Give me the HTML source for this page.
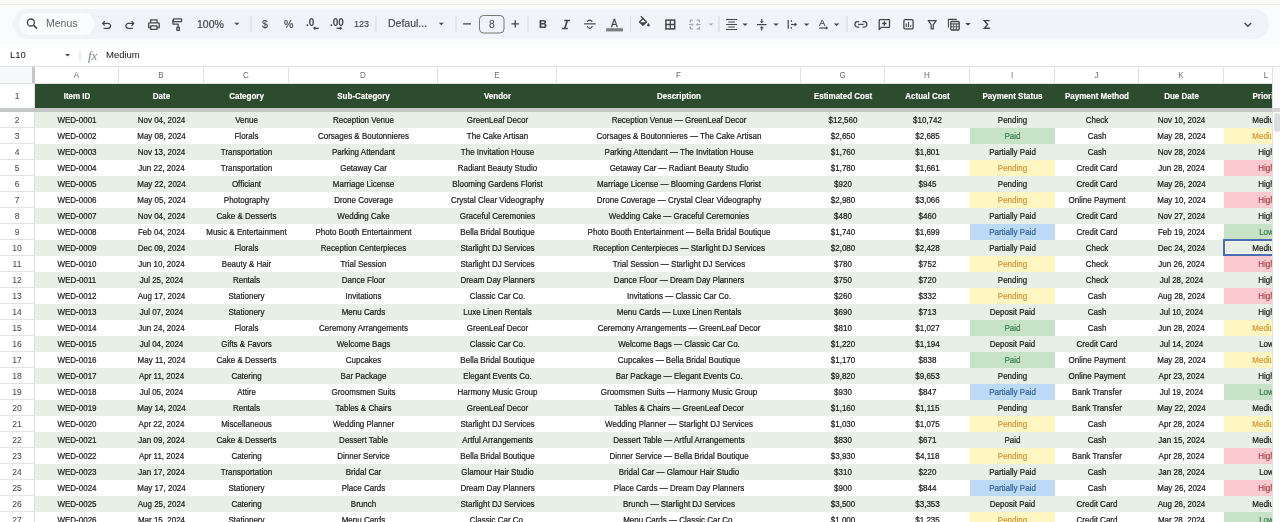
<!DOCTYPE html>
<html><head><meta charset="utf-8">
<style>
*{margin:0;padding:0;box-sizing:border-box}
html,body{width:1280px;height:522px;overflow:hidden;background:#fff;font-family:"Liberation Sans",sans-serif}
body>div,body>svg{will-change:transform}
.a{position:absolute}
#top{left:0;top:0;width:1280px;height:5px;background:#f9f9f5;border-bottom:1px solid #ebebeb}
#tbwrap{left:0;top:5px;width:1280px;height:39px;background:#f9fbfd}
#tb{left:13px;top:9.3px;width:1256px;height:29.7px;border-radius:15px;background:#f0f3f8}
#search{left:19px;top:13px;width:75px;height:21.5px;border-radius:11px;background:#fbfcfe}
.tt{color:#444746;font-size:10.5px;line-height:12px;white-space:nowrap}
#fbar{left:0;top:44px;width:1280px;height:22px;background:#fff}
.ch{position:absolute;top:66px;height:18px;border-right:1px solid #e1e3e1;border-top:1px solid #e1e3e1;border-bottom:1px solid #e1e3e1;background:#fff;color:#6a6e72;font-size:8px;line-height:17px;text-align:center}
.cell{position:absolute;height:16px;line-height:16px;font-size:8px;text-align:center;white-space:nowrap;overflow:hidden;color:#1a1a1a}
.cell span{display:inline-block;transform:translateY(0.5px) scaleY(1.12);-webkit-text-stroke:0.2px currentColor}
.rh{position:absolute;left:0;width:35px;height:16px;border-right:1px solid #e1e3e1;border-bottom:1px solid #e1e3e1;background:#fff;color:#505357;font-size:8.5px;line-height:15px;text-align:center}
.rh span{display:inline-block;transform:translateY(0.6px) scaleY(1.12);-webkit-text-stroke:0.1px currentColor}
.ch span{display:inline-block;transform:translateY(-0.4px) scaleY(1.1)}
.hd{position:absolute;top:84px;height:24px;line-height:24px;font-size:8px;font-weight:bold;color:#fff;text-align:center;white-space:nowrap;overflow:hidden}
.hd span{display:inline-block;transform:translateY(0.9px) scaleY(1.1);-webkit-text-stroke:0.15px #fff}
</style></head><body>
<div class="a" id="top"></div>
<div class="a" id="tbwrap"></div>
<div class="a" id="tb"></div>
<div class="a" id="search"></div>
<div class="a" id="fbar"></div>

<svg class="a" style="left:0;top:0" width="1280" height="66" viewBox="0 0 1280 66">
<g fill="none" stroke="#444746" stroke-width="1.3" stroke-linecap="butt" stroke-linejoin="round">
<circle cx="30.9" cy="22.5" r="3.5"/>
<path d="M33.5 25.1L37 28.6" stroke-width="1.5"/>
<path d="M104.8 21.2L102.6 23.4L104.8 25.6"/>
<path d="M102.8 23.4H108.1A2.45 2.45 0 0 1 108.1 28.3H103.5"/>
<path d="M131.6 21.2L133.8 23.4L131.6 25.6"/>
<path d="M133.6 23.4H128.3A2.45 2.45 0 0 0 128.3 28.3H132.9"/>
<path d="M150.7 22.4V19.8H157V22.4"/>
<path d="M150.7 27.6H148.7V23.6Q148.7 22.8 149.5 22.8H158.4Q159.2 22.8 159.2 23.6V27.6H157"/>
<rect x="150.7" y="25.9" width="6.3" height="3.4"/>
<rect x="173.4" y="18.8" width="8.2" height="2.9" rx="0.6"/>
<path d="M173.4 20.2H172.9V24.1H178.1V27.3"/>
<rect x="176.9" y="27.3" width="2.4" height="3" fill="none"/>
</g>
<path d="M234.4 22.8L239.4 22.8L236.9 25.2Z" fill="#444746"/>
<rect x="250.5" y="16" width="1" height="16" fill="#d5d8dc"/>
<rect x="375.5" y="16" width="1" height="16" fill="#d5d8dc"/>
<rect x="455.5" y="16" width="1" height="16" fill="#d5d8dc"/>
<rect x="527.5" y="16" width="1" height="16" fill="#d5d8dc"/>
<rect x="630" y="16" width="1" height="16" fill="#d5d8dc"/>
<rect x="718.5" y="16" width="1" height="16" fill="#d5d8dc"/>
<rect x="846.5" y="16" width="1" height="16" fill="#d5d8dc"/>
<path d="M318.8 28.3H314.3" stroke="#444746" stroke-width="1.3"/><path d="M312.9 28.3L315.4 26.3V30.3Z" fill="#444746"/>
<path d="M336.6 28.3H340.6" stroke="#444746" stroke-width="1.3"/><path d="M342.4 28.3L339.9 26.3V30.3Z" fill="#444746"/>
<path d="M438.8 22.8L443.8 22.8L441.3 25.2Z" fill="#444746"/>
<path d="M463.2 23.9H471" stroke="#444746" stroke-width="1.3"/>
<path d="M511.5 23.9H519M515.25 20.2V27.6" stroke="#444746" stroke-width="1.3"/>
<rect x="479.5" y="15.5" width="24.5" height="17.5" rx="4" fill="none" stroke="#747775" stroke-width="1"/>
<path d="M564.2 20.5H570.1M561.9 28.5H567.8M567.3 20.5L564.7 28.5" fill="none" stroke="#444746" stroke-width="1.7"/>
<path d="M584 23.8H595.6" stroke="#6b6d6e" stroke-width="1.5"/>
<path d="M587.3 21.8C588 20.4 588.8 20.1 589.75 20.1C590.7 20.1 591.5 20.4 592.2 21.6M587.3 26.1C587.8 27.7 588.6 28.4 589.75 28.4C590.9 28.4 591.8 27.7 592.3 26.1" fill="none" stroke="#444746" stroke-width="1.3"/>
<rect x="606.2" y="28.2" width="16.8" height="3.2" fill="#7b7d7e"/>
<path d="M640.9 16.3L643.6 19" stroke="#444746" stroke-width="1.4"/>
<path d="M639.5 21.9L643 18.4L646.5 21.9L643 25.3Z" fill="none" stroke="#444746" stroke-width="1.4" stroke-linejoin="round"/>
<path d="M639.9 22.2H646.1L643 25.2Z" fill="#444746"/>
<path d="M648.4 23Q649.7 24.6 649.7 25.3A1.3 1.3 0 0 1 647.1 25.3Q647.1 24.6 648.4 23Z" fill="#444746"/>
<rect x="665.9" y="20.1" width="8.8" height="8.8" fill="none" stroke="#444746" stroke-width="1.5"/><path d="M670.3 20.1V28.9M665.9 24.5H674.7" stroke="#444746" stroke-width="1.3"/>
<path d="M690.3 22.4V20.1H692.9M690.3 26.5V28.9H692.9M699.3 22.4V20.1H696.7M699.3 26.5V28.9H696.7" fill="none" stroke="#a3a6a9" stroke-width="1.2"/>
<path d="M689 24.5H692M700.6 24.5H697.6" stroke="#a3a6a9" stroke-width="1.2"/>
<path d="M693.8 24.5L691.6 22.9V26.1ZM695.8 24.5L698 22.9V26.1Z" fill="#a3a6a9"/>
<path d="M708.5 23.5L713.3 23.5L710.9 25.6Z" fill="#a3a6a9"/>
<path d="M726.1 19.5H737.1M728.3 22H734.9M726.1 24.5H737.1M728.3 27H734.9M726.1 29.5H737.1" stroke="#444746" stroke-width="1.1"/>
<path d="M742.3 23.4L747.9 23.4L745.0999999999999 26Z" fill="#444746"/>
<path d="M757 24.7H766.5M761.75 19V22.3M761.75 27.1V30.4" stroke="#444746" stroke-width="1.2"/>
<path d="M759.8 21.2L761.75 23.3L763.7 21.2ZM759.8 28.2L761.75 26.1L763.7 28.2Z" fill="#444746"/>
<path d="M773.3 23.4L778.7 23.4L776.0 26Z" fill="#444746"/>
<path d="M788.2 20.1V28.8" stroke="#444746" stroke-width="1.2"/><path d="M791 24.5H795.5" stroke="#444746" stroke-width="1.2"/><path d="M797.1 24.5L794.6 22.4V26.6Z" fill="#444746"/>
<path d="M791.3 20V22M791.3 27V29" stroke="#444746" stroke-width="1"/>
<path d="M803.8 23.4L809.3 23.4L806.55 26Z" fill="#444746"/>
<path d="M819.3 28H826.5" stroke="#444746" stroke-width="1.2"/><path d="M828.3 28L825.9 26.3V29.7Z" fill="#444746"/>
<path d="M833.7 23.4L839.3 23.4L836.5 26Z" fill="#444746"/>
<path d="M859.2 21.6H857.7A2.8 2.8 0 0 0 857.7 27.2H859.2M862.6 21.6H864.1A2.8 2.8 0 0 1 864.1 27.2H862.6M858.2 24.4H863.6" fill="none" stroke="#444746" stroke-width="1.3"/>
<path d="M879.2 29.6V20.2Q879.2 19.6 879.8 19.6H888.9Q889.5 19.6 889.5 20.2V26.8Q889.5 27.4 888.9 27.4H881.4Z" fill="none" stroke="#444746" stroke-width="1.3" stroke-linejoin="round"/>
<path d="M884.35 21.3V25.7M882.15 23.5H886.55" stroke="#444746" stroke-width="1.3"/>
<rect x="903.9" y="19.7" width="9.2" height="9.2" rx="1.2" fill="none" stroke="#444746" stroke-width="1.3"/>
<path d="M906.3 23.6V27M908.5 21.9V27M910.7 25.2V27" stroke="#444746" stroke-width="1.1"/>
<path d="M928.2 20.6H936.3L933.3 24.6V28.9H931.2V24.6Z" fill="none" stroke="#444746" stroke-width="1.2" stroke-linejoin="round"/>
<path d="M948.4 27.6V19.4H956.8" fill="none" stroke="#444746" stroke-width="1.1"/>
<rect x="950.8" y="21.5" width="8.4" height="8.5" rx="1" fill="none" stroke="#444746" stroke-width="1.3"/>
<path d="M950.8 23.9H959.2" stroke="#444746" stroke-width="1.1"/>
<path d="M950.8 26.8H959.2M953.6 23.9V30M956.4 23.9V30" stroke="#444746" stroke-width="0.9"/>
<path d="M965.3 23L970.7 23L968.0 25.8Z" fill="#444746"/>
<path d="M989.6 20.6H984.4L987.6 24.5L984.4 28.3H989.8" fill="none" stroke="#444746" stroke-width="1.4" stroke-linejoin="miter"/>
<path d="M1244.6 23.1L1247.9 26.3L1251.2 23.1" fill="none" stroke="#444746" stroke-width="1.4"/>
<path d="M65 54L70.2 54L67.6 56.4Z" fill="#444746"/>
<rect x="79.5" y="50.5" width="1" height="11.5" fill="#dadce0"/>
</svg>

<div class="a tt" style="left:46px;top:17px;font-size:10.5px;color:#5f6368">Menus</div>
<div class="a tt" style="left:196.5px;top:18px;font-size:10.5px;-webkit-text-stroke:0.2px #444746">100%</div>
<div class="a tt" style="left:261.5px;top:17.6px;font-size:10.5px;-webkit-text-stroke:0.12px #444746">$</div>
<div class="a tt" style="left:284px;top:18px;font-size:10.5px;-webkit-text-stroke:0.2px #444746">%</div>
<div class="a tt" style="left:306.3px;top:16.9px;font-size:10px;font-weight:bold">.0</div>
<div class="a tt" style="left:329.8px;top:16.9px;font-size:10px;font-weight:bold">.00</div>
<div class="a tt" style="left:353.5px;top:17.6px;font-size:9px;-webkit-text-stroke:0.15px #444746">123</div>
<div class="a tt" style="left:387.5px;top:17px;font-size:10.5px;-webkit-text-stroke:0.15px #444746">Defaul...</div>
<div class="a tt" style="left:488.5px;top:17.5px;font-size:10.5px">8</div>
<div class="a tt" style="left:538.5px;top:18px;font-size:11px;font-weight:bold;-webkit-text-stroke:0.2px #444746">B</div>
<div class="a tt" style="left:610.8px;top:17.9px;font-size:10px;-webkit-text-stroke:0.3px #444746">A</div>
<div class="a tt" style="left:818.7px;top:16.5px;font-size:9.5px;-webkit-text-stroke:0.15px #444746">A</div>
<div class="a tt" style="left:10px;top:48.6px;font-size:9.5px;color:#1f1f1f;-webkit-text-stroke:0.05px #1f1f1f">L10</div>
<div class="a tt" style="left:87.5px;top:48.5px;font-size:13px;line-height:14px;font-style:italic;font-family:'Liberation Serif',serif;color:#80868b">fx</div>
<div class="a tt" style="left:106px;top:49px;font-size:9.5px;color:#1f1f1f;-webkit-text-stroke:0.05px #1f1f1f">Medium</div>

<div class="a" style="left:0;top:66px;width:35px;height:18px;background:#f8f9fa;border-top:1px solid #e1e3e1;border-bottom:1px solid #e1e3e1"></div>
<div class="a" style="left:32px;top:67px;width:3px;height:16px;background:#c4c7c5"></div>
<div class="ch" style="left:35px;width:84px"><span>A</span></div>
<div class="ch" style="left:119px;width:85px"><span>B</span></div>
<div class="ch" style="left:204px;width:85px"><span>C</span></div>
<div class="ch" style="left:289px;width:149px"><span>D</span></div>
<div class="ch" style="left:438px;width:119px"><span>E</span></div>
<div class="ch" style="left:557px;width:244px"><span>F</span></div>
<div class="ch" style="left:801px;width:84px"><span>G</span></div>
<div class="ch" style="left:885px;width:85px"><span>H</span></div>
<div class="ch" style="left:970px;width:85px"><span>I</span></div>
<div class="ch" style="left:1055px;width:84px"><span>J</span></div>
<div class="ch" style="left:1139px;width:85px"><span>K</span></div>
<div class="ch" style="left:1224px;width:85px"><span>L</span></div>
<div class="rh" style="top:84px;height:24px;line-height:24px;border-bottom:none"><span style="transform:translateY(-0.4px) scaleY(1.12)">1</span></div>
<div class="a" style="left:35px;top:84px;width:1245px;height:24px;background:#2d4b2e"></div>
<div class="hd" style="left:35px;width:84px"><span>Item ID</span></div>
<div class="hd" style="left:119px;width:85px"><span>Date</span></div>
<div class="hd" style="left:204px;width:85px"><span>Category</span></div>
<div class="hd" style="left:289px;width:149px"><span>Sub-Category</span></div>
<div class="hd" style="left:438px;width:119px"><span>Vendor</span></div>
<div class="hd" style="left:557px;width:244px"><span>Description</span></div>
<div class="hd" style="left:801px;width:84px"><span>Estimated Cost</span></div>
<div class="hd" style="left:885px;width:85px"><span>Actual Cost</span></div>
<div class="hd" style="left:970px;width:85px"><span>Payment Status</span></div>
<div class="hd" style="left:1055px;width:84px"><span>Payment Method</span></div>
<div class="hd" style="left:1139px;width:85px"><span>Due Date</span></div>
<div class="hd" style="left:1224px;width:85px"><span>Priority</span></div>
<div class="a" style="left:0;top:108px;width:1280px;height:4px;background:#c4c7c5"></div>
<div class="rh" style="top:112px"><span>2</span></div>
<div class="a" style="left:35px;top:112px;width:1245px;height:16px;background:#e8efe4"></div>
<div class="cell" style="left:35px;top:112px;width:84px;"><span>WED-0001</span></div>
<div class="cell" style="left:119px;top:112px;width:85px;"><span>Nov 04, 2024</span></div>
<div class="cell" style="left:204px;top:112px;width:85px;"><span>Venue</span></div>
<div class="cell" style="left:289px;top:112px;width:149px;"><span>Reception Venue</span></div>
<div class="cell" style="left:438px;top:112px;width:119px;"><span>GreenLeaf Decor</span></div>
<div class="cell" style="left:557px;top:112px;width:244px;"><span>Reception Venue — GreenLeaf Decor</span></div>
<div class="cell" style="left:801px;top:112px;width:84px;"><span>$12,560</span></div>
<div class="cell" style="left:885px;top:112px;width:85px;"><span>$10,742</span></div>
<div class="cell" style="left:970px;top:112px;width:85px;"><span>Pending</span></div>
<div class="cell" style="left:1055px;top:112px;width:84px;"><span>Check</span></div>
<div class="cell" style="left:1139px;top:112px;width:85px;"><span>Nov 10, 2024</span></div>
<div class="cell" style="left:1224px;top:112px;width:85px;"><span>Medium</span></div>
<div class="rh" style="top:128px"><span>3</span></div>
<div class="a" style="left:35px;top:128px;width:1245px;height:16px;background:#ffffff"></div>
<div class="cell" style="left:35px;top:128px;width:84px;"><span>WED-0002</span></div>
<div class="cell" style="left:119px;top:128px;width:85px;"><span>May 08, 2024</span></div>
<div class="cell" style="left:204px;top:128px;width:85px;"><span>Florals</span></div>
<div class="cell" style="left:289px;top:128px;width:149px;"><span>Corsages &amp; Boutonnieres</span></div>
<div class="cell" style="left:438px;top:128px;width:119px;"><span>The Cake Artisan</span></div>
<div class="cell" style="left:557px;top:128px;width:244px;"><span>Corsages &amp; Boutonnieres — The Cake Artisan</span></div>
<div class="cell" style="left:801px;top:128px;width:84px;"><span>$2,650</span></div>
<div class="cell" style="left:885px;top:128px;width:85px;"><span>$2,685</span></div>
<div class="cell" style="left:970px;top:128px;width:85px;background:#c6e3c8;color:#3b7a45;"><span>Paid</span></div>
<div class="cell" style="left:1055px;top:128px;width:84px;"><span>Cash</span></div>
<div class="cell" style="left:1139px;top:128px;width:85px;"><span>May 28, 2024</span></div>
<div class="cell" style="left:1224px;top:128px;width:85px;background:#fff6c2;color:#d0973a;"><span>Medium</span></div>
<div class="rh" style="top:144px"><span>4</span></div>
<div class="a" style="left:35px;top:144px;width:1245px;height:16px;background:#e8efe4"></div>
<div class="cell" style="left:35px;top:144px;width:84px;"><span>WED-0003</span></div>
<div class="cell" style="left:119px;top:144px;width:85px;"><span>Nov 13, 2024</span></div>
<div class="cell" style="left:204px;top:144px;width:85px;"><span>Transportation</span></div>
<div class="cell" style="left:289px;top:144px;width:149px;"><span>Parking Attendant</span></div>
<div class="cell" style="left:438px;top:144px;width:119px;"><span>The Invitation House</span></div>
<div class="cell" style="left:557px;top:144px;width:244px;"><span>Parking Attendant — The Invitation House</span></div>
<div class="cell" style="left:801px;top:144px;width:84px;"><span>$1,760</span></div>
<div class="cell" style="left:885px;top:144px;width:85px;"><span>$1,801</span></div>
<div class="cell" style="left:970px;top:144px;width:85px;"><span>Partially Paid</span></div>
<div class="cell" style="left:1055px;top:144px;width:84px;"><span>Cash</span></div>
<div class="cell" style="left:1139px;top:144px;width:85px;"><span>Nov 28, 2024</span></div>
<div class="cell" style="left:1224px;top:144px;width:85px;"><span>High</span></div>
<div class="rh" style="top:160px"><span>5</span></div>
<div class="a" style="left:35px;top:160px;width:1245px;height:16px;background:#ffffff"></div>
<div class="cell" style="left:35px;top:160px;width:84px;"><span>WED-0004</span></div>
<div class="cell" style="left:119px;top:160px;width:85px;"><span>Jun 22, 2024</span></div>
<div class="cell" style="left:204px;top:160px;width:85px;"><span>Transportation</span></div>
<div class="cell" style="left:289px;top:160px;width:149px;"><span>Getaway Car</span></div>
<div class="cell" style="left:438px;top:160px;width:119px;"><span>Radiant Beauty Studio</span></div>
<div class="cell" style="left:557px;top:160px;width:244px;"><span>Getaway Car — Radiant Beauty Studio</span></div>
<div class="cell" style="left:801px;top:160px;width:84px;"><span>$1,780</span></div>
<div class="cell" style="left:885px;top:160px;width:85px;"><span>$1,661</span></div>
<div class="cell" style="left:970px;top:160px;width:85px;background:#fff6c2;color:#d0973a;"><span>Pending</span></div>
<div class="cell" style="left:1055px;top:160px;width:84px;"><span>Credit Card</span></div>
<div class="cell" style="left:1139px;top:160px;width:85px;"><span>Jun 28, 2024</span></div>
<div class="cell" style="left:1224px;top:160px;width:85px;background:#fbcbd0;color:#a9404c;"><span>High</span></div>
<div class="rh" style="top:176px"><span>6</span></div>
<div class="a" style="left:35px;top:176px;width:1245px;height:16px;background:#e8efe4"></div>
<div class="cell" style="left:35px;top:176px;width:84px;"><span>WED-0005</span></div>
<div class="cell" style="left:119px;top:176px;width:85px;"><span>May 22, 2024</span></div>
<div class="cell" style="left:204px;top:176px;width:85px;"><span>Officiant</span></div>
<div class="cell" style="left:289px;top:176px;width:149px;"><span>Marriage License</span></div>
<div class="cell" style="left:438px;top:176px;width:119px;"><span>Blooming Gardens Florist</span></div>
<div class="cell" style="left:557px;top:176px;width:244px;"><span>Marriage License — Blooming Gardens Florist</span></div>
<div class="cell" style="left:801px;top:176px;width:84px;"><span>$920</span></div>
<div class="cell" style="left:885px;top:176px;width:85px;"><span>$945</span></div>
<div class="cell" style="left:970px;top:176px;width:85px;"><span>Pending</span></div>
<div class="cell" style="left:1055px;top:176px;width:84px;"><span>Credit Card</span></div>
<div class="cell" style="left:1139px;top:176px;width:85px;"><span>May 26, 2024</span></div>
<div class="cell" style="left:1224px;top:176px;width:85px;"><span>High</span></div>
<div class="rh" style="top:192px"><span>7</span></div>
<div class="a" style="left:35px;top:192px;width:1245px;height:16px;background:#ffffff"></div>
<div class="cell" style="left:35px;top:192px;width:84px;"><span>WED-0006</span></div>
<div class="cell" style="left:119px;top:192px;width:85px;"><span>May 05, 2024</span></div>
<div class="cell" style="left:204px;top:192px;width:85px;"><span>Photography</span></div>
<div class="cell" style="left:289px;top:192px;width:149px;"><span>Drone Coverage</span></div>
<div class="cell" style="left:438px;top:192px;width:119px;"><span>Crystal Clear Videography</span></div>
<div class="cell" style="left:557px;top:192px;width:244px;"><span>Drone Coverage — Crystal Clear Videography</span></div>
<div class="cell" style="left:801px;top:192px;width:84px;"><span>$2,980</span></div>
<div class="cell" style="left:885px;top:192px;width:85px;"><span>$3,066</span></div>
<div class="cell" style="left:970px;top:192px;width:85px;background:#fff6c2;color:#d0973a;"><span>Pending</span></div>
<div class="cell" style="left:1055px;top:192px;width:84px;"><span>Online Payment</span></div>
<div class="cell" style="left:1139px;top:192px;width:85px;"><span>May 10, 2024</span></div>
<div class="cell" style="left:1224px;top:192px;width:85px;background:#fbcbd0;color:#a9404c;"><span>High</span></div>
<div class="rh" style="top:208px"><span>8</span></div>
<div class="a" style="left:35px;top:208px;width:1245px;height:16px;background:#e8efe4"></div>
<div class="cell" style="left:35px;top:208px;width:84px;"><span>WED-0007</span></div>
<div class="cell" style="left:119px;top:208px;width:85px;"><span>Nov 04, 2024</span></div>
<div class="cell" style="left:204px;top:208px;width:85px;"><span>Cake &amp; Desserts</span></div>
<div class="cell" style="left:289px;top:208px;width:149px;"><span>Wedding Cake</span></div>
<div class="cell" style="left:438px;top:208px;width:119px;"><span>Graceful Ceremonies</span></div>
<div class="cell" style="left:557px;top:208px;width:244px;"><span>Wedding Cake — Graceful Ceremonies</span></div>
<div class="cell" style="left:801px;top:208px;width:84px;"><span>$480</span></div>
<div class="cell" style="left:885px;top:208px;width:85px;"><span>$460</span></div>
<div class="cell" style="left:970px;top:208px;width:85px;"><span>Partially Paid</span></div>
<div class="cell" style="left:1055px;top:208px;width:84px;"><span>Credit Card</span></div>
<div class="cell" style="left:1139px;top:208px;width:85px;"><span>Nov 27, 2024</span></div>
<div class="cell" style="left:1224px;top:208px;width:85px;"><span>High</span></div>
<div class="rh" style="top:224px"><span>9</span></div>
<div class="a" style="left:35px;top:224px;width:1245px;height:16px;background:#ffffff"></div>
<div class="cell" style="left:35px;top:224px;width:84px;"><span>WED-0008</span></div>
<div class="cell" style="left:119px;top:224px;width:85px;"><span>Feb 04, 2024</span></div>
<div class="cell" style="left:204px;top:224px;width:85px;"><span>Music &amp; Entertainment</span></div>
<div class="cell" style="left:289px;top:224px;width:149px;"><span>Photo Booth Entertainment</span></div>
<div class="cell" style="left:438px;top:224px;width:119px;"><span>Bella Bridal Boutique</span></div>
<div class="cell" style="left:557px;top:224px;width:244px;"><span>Photo Booth Entertainment — Bella Bridal Boutique</span></div>
<div class="cell" style="left:801px;top:224px;width:84px;"><span>$1,740</span></div>
<div class="cell" style="left:885px;top:224px;width:85px;"><span>$1,699</span></div>
<div class="cell" style="left:970px;top:224px;width:85px;background:#bcdaf6;color:#2f5f96;"><span>Partially Paid</span></div>
<div class="cell" style="left:1055px;top:224px;width:84px;"><span>Credit Card</span></div>
<div class="cell" style="left:1139px;top:224px;width:85px;"><span>Feb 19, 2024</span></div>
<div class="cell" style="left:1224px;top:224px;width:85px;background:#c6e3c8;color:#3b7a45;"><span>Low</span></div>
<div class="rh" style="top:240px"><span>10</span></div>
<div class="a" style="left:35px;top:240px;width:1245px;height:16px;background:#e8efe4"></div>
<div class="cell" style="left:35px;top:240px;width:84px;"><span>WED-0009</span></div>
<div class="cell" style="left:119px;top:240px;width:85px;"><span>Dec 09, 2024</span></div>
<div class="cell" style="left:204px;top:240px;width:85px;"><span>Florals</span></div>
<div class="cell" style="left:289px;top:240px;width:149px;"><span>Reception Centerpieces</span></div>
<div class="cell" style="left:438px;top:240px;width:119px;"><span>Starlight DJ Services</span></div>
<div class="cell" style="left:557px;top:240px;width:244px;"><span>Reception Centerpieces — Starlight DJ Services</span></div>
<div class="cell" style="left:801px;top:240px;width:84px;"><span>$2,080</span></div>
<div class="cell" style="left:885px;top:240px;width:85px;"><span>$2,428</span></div>
<div class="cell" style="left:970px;top:240px;width:85px;"><span>Partially Paid</span></div>
<div class="cell" style="left:1055px;top:240px;width:84px;"><span>Check</span></div>
<div class="cell" style="left:1139px;top:240px;width:85px;"><span>Dec 24, 2024</span></div>
<div class="cell" style="left:1224px;top:240px;width:85px;"><span>Medium</span></div>
<div class="rh" style="top:256px"><span>11</span></div>
<div class="a" style="left:35px;top:256px;width:1245px;height:16px;background:#ffffff"></div>
<div class="cell" style="left:35px;top:256px;width:84px;"><span>WED-0010</span></div>
<div class="cell" style="left:119px;top:256px;width:85px;"><span>Jun 10, 2024</span></div>
<div class="cell" style="left:204px;top:256px;width:85px;"><span>Beauty &amp; Hair</span></div>
<div class="cell" style="left:289px;top:256px;width:149px;"><span>Trial Session</span></div>
<div class="cell" style="left:438px;top:256px;width:119px;"><span>Starlight DJ Services</span></div>
<div class="cell" style="left:557px;top:256px;width:244px;"><span>Trial Session — Starlight DJ Services</span></div>
<div class="cell" style="left:801px;top:256px;width:84px;"><span>$780</span></div>
<div class="cell" style="left:885px;top:256px;width:85px;"><span>$752</span></div>
<div class="cell" style="left:970px;top:256px;width:85px;background:#fff6c2;color:#d0973a;"><span>Pending</span></div>
<div class="cell" style="left:1055px;top:256px;width:84px;"><span>Check</span></div>
<div class="cell" style="left:1139px;top:256px;width:85px;"><span>Jun 26, 2024</span></div>
<div class="cell" style="left:1224px;top:256px;width:85px;background:#fbcbd0;color:#a9404c;"><span>High</span></div>
<div class="rh" style="top:272px"><span>12</span></div>
<div class="a" style="left:35px;top:272px;width:1245px;height:16px;background:#e8efe4"></div>
<div class="cell" style="left:35px;top:272px;width:84px;"><span>WED-0011</span></div>
<div class="cell" style="left:119px;top:272px;width:85px;"><span>Jul 25, 2024</span></div>
<div class="cell" style="left:204px;top:272px;width:85px;"><span>Rentals</span></div>
<div class="cell" style="left:289px;top:272px;width:149px;"><span>Dance Floor</span></div>
<div class="cell" style="left:438px;top:272px;width:119px;"><span>Dream Day Planners</span></div>
<div class="cell" style="left:557px;top:272px;width:244px;"><span>Dance Floor — Dream Day Planners</span></div>
<div class="cell" style="left:801px;top:272px;width:84px;"><span>$750</span></div>
<div class="cell" style="left:885px;top:272px;width:85px;"><span>$720</span></div>
<div class="cell" style="left:970px;top:272px;width:85px;"><span>Pending</span></div>
<div class="cell" style="left:1055px;top:272px;width:84px;"><span>Check</span></div>
<div class="cell" style="left:1139px;top:272px;width:85px;"><span>Jul 28, 2024</span></div>
<div class="cell" style="left:1224px;top:272px;width:85px;"><span>High</span></div>
<div class="rh" style="top:288px"><span>13</span></div>
<div class="a" style="left:35px;top:288px;width:1245px;height:16px;background:#ffffff"></div>
<div class="cell" style="left:35px;top:288px;width:84px;"><span>WED-0012</span></div>
<div class="cell" style="left:119px;top:288px;width:85px;"><span>Aug 17, 2024</span></div>
<div class="cell" style="left:204px;top:288px;width:85px;"><span>Stationery</span></div>
<div class="cell" style="left:289px;top:288px;width:149px;"><span>Invitations</span></div>
<div class="cell" style="left:438px;top:288px;width:119px;"><span>Classic Car Co.</span></div>
<div class="cell" style="left:557px;top:288px;width:244px;"><span>Invitations — Classic Car Co.</span></div>
<div class="cell" style="left:801px;top:288px;width:84px;"><span>$260</span></div>
<div class="cell" style="left:885px;top:288px;width:85px;"><span>$332</span></div>
<div class="cell" style="left:970px;top:288px;width:85px;background:#fff6c2;color:#d0973a;"><span>Pending</span></div>
<div class="cell" style="left:1055px;top:288px;width:84px;"><span>Cash</span></div>
<div class="cell" style="left:1139px;top:288px;width:85px;"><span>Aug 28, 2024</span></div>
<div class="cell" style="left:1224px;top:288px;width:85px;background:#fbcbd0;color:#a9404c;"><span>High</span></div>
<div class="rh" style="top:304px"><span>14</span></div>
<div class="a" style="left:35px;top:304px;width:1245px;height:16px;background:#e8efe4"></div>
<div class="cell" style="left:35px;top:304px;width:84px;"><span>WED-0013</span></div>
<div class="cell" style="left:119px;top:304px;width:85px;"><span>Jul 07, 2024</span></div>
<div class="cell" style="left:204px;top:304px;width:85px;"><span>Stationery</span></div>
<div class="cell" style="left:289px;top:304px;width:149px;"><span>Menu Cards</span></div>
<div class="cell" style="left:438px;top:304px;width:119px;"><span>Luxe Linen Rentals</span></div>
<div class="cell" style="left:557px;top:304px;width:244px;"><span>Menu Cards — Luxe Linen Rentals</span></div>
<div class="cell" style="left:801px;top:304px;width:84px;"><span>$690</span></div>
<div class="cell" style="left:885px;top:304px;width:85px;"><span>$713</span></div>
<div class="cell" style="left:970px;top:304px;width:85px;"><span>Deposit Paid</span></div>
<div class="cell" style="left:1055px;top:304px;width:84px;"><span>Cash</span></div>
<div class="cell" style="left:1139px;top:304px;width:85px;"><span>Jul 10, 2024</span></div>
<div class="cell" style="left:1224px;top:304px;width:85px;"><span>High</span></div>
<div class="rh" style="top:320px"><span>15</span></div>
<div class="a" style="left:35px;top:320px;width:1245px;height:16px;background:#ffffff"></div>
<div class="cell" style="left:35px;top:320px;width:84px;"><span>WED-0014</span></div>
<div class="cell" style="left:119px;top:320px;width:85px;"><span>Jun 24, 2024</span></div>
<div class="cell" style="left:204px;top:320px;width:85px;"><span>Florals</span></div>
<div class="cell" style="left:289px;top:320px;width:149px;"><span>Ceremony Arrangements</span></div>
<div class="cell" style="left:438px;top:320px;width:119px;"><span>GreenLeaf Decor</span></div>
<div class="cell" style="left:557px;top:320px;width:244px;"><span>Ceremony Arrangements — GreenLeaf Decor</span></div>
<div class="cell" style="left:801px;top:320px;width:84px;"><span>$810</span></div>
<div class="cell" style="left:885px;top:320px;width:85px;"><span>$1,027</span></div>
<div class="cell" style="left:970px;top:320px;width:85px;background:#c6e3c8;color:#3b7a45;"><span>Paid</span></div>
<div class="cell" style="left:1055px;top:320px;width:84px;"><span>Cash</span></div>
<div class="cell" style="left:1139px;top:320px;width:85px;"><span>Jun 28, 2024</span></div>
<div class="cell" style="left:1224px;top:320px;width:85px;background:#fff6c2;color:#d0973a;"><span>Medium</span></div>
<div class="rh" style="top:336px"><span>16</span></div>
<div class="a" style="left:35px;top:336px;width:1245px;height:16px;background:#e8efe4"></div>
<div class="cell" style="left:35px;top:336px;width:84px;"><span>WED-0015</span></div>
<div class="cell" style="left:119px;top:336px;width:85px;"><span>Jul 04, 2024</span></div>
<div class="cell" style="left:204px;top:336px;width:85px;"><span>Gifts &amp; Favors</span></div>
<div class="cell" style="left:289px;top:336px;width:149px;"><span>Welcome Bags</span></div>
<div class="cell" style="left:438px;top:336px;width:119px;"><span>Classic Car Co.</span></div>
<div class="cell" style="left:557px;top:336px;width:244px;"><span>Welcome Bags — Classic Car Co.</span></div>
<div class="cell" style="left:801px;top:336px;width:84px;"><span>$1,220</span></div>
<div class="cell" style="left:885px;top:336px;width:85px;"><span>$1,194</span></div>
<div class="cell" style="left:970px;top:336px;width:85px;"><span>Deposit Paid</span></div>
<div class="cell" style="left:1055px;top:336px;width:84px;"><span>Credit Card</span></div>
<div class="cell" style="left:1139px;top:336px;width:85px;"><span>Jul 14, 2024</span></div>
<div class="cell" style="left:1224px;top:336px;width:85px;"><span>Low</span></div>
<div class="rh" style="top:352px"><span>17</span></div>
<div class="a" style="left:35px;top:352px;width:1245px;height:16px;background:#ffffff"></div>
<div class="cell" style="left:35px;top:352px;width:84px;"><span>WED-0016</span></div>
<div class="cell" style="left:119px;top:352px;width:85px;"><span>May 11, 2024</span></div>
<div class="cell" style="left:204px;top:352px;width:85px;"><span>Cake &amp; Desserts</span></div>
<div class="cell" style="left:289px;top:352px;width:149px;"><span>Cupcakes</span></div>
<div class="cell" style="left:438px;top:352px;width:119px;"><span>Bella Bridal Boutique</span></div>
<div class="cell" style="left:557px;top:352px;width:244px;"><span>Cupcakes — Bella Bridal Boutique</span></div>
<div class="cell" style="left:801px;top:352px;width:84px;"><span>$1,170</span></div>
<div class="cell" style="left:885px;top:352px;width:85px;"><span>$838</span></div>
<div class="cell" style="left:970px;top:352px;width:85px;background:#c6e3c8;color:#3b7a45;"><span>Paid</span></div>
<div class="cell" style="left:1055px;top:352px;width:84px;"><span>Online Payment</span></div>
<div class="cell" style="left:1139px;top:352px;width:85px;"><span>May 28, 2024</span></div>
<div class="cell" style="left:1224px;top:352px;width:85px;background:#fff6c2;color:#d0973a;"><span>Medium</span></div>
<div class="rh" style="top:368px"><span>18</span></div>
<div class="a" style="left:35px;top:368px;width:1245px;height:16px;background:#e8efe4"></div>
<div class="cell" style="left:35px;top:368px;width:84px;"><span>WED-0017</span></div>
<div class="cell" style="left:119px;top:368px;width:85px;"><span>Apr 11, 2024</span></div>
<div class="cell" style="left:204px;top:368px;width:85px;"><span>Catering</span></div>
<div class="cell" style="left:289px;top:368px;width:149px;"><span>Bar Package</span></div>
<div class="cell" style="left:438px;top:368px;width:119px;"><span>Elegant Events Co.</span></div>
<div class="cell" style="left:557px;top:368px;width:244px;"><span>Bar Package — Elegant Events Co.</span></div>
<div class="cell" style="left:801px;top:368px;width:84px;"><span>$9,820</span></div>
<div class="cell" style="left:885px;top:368px;width:85px;"><span>$9,653</span></div>
<div class="cell" style="left:970px;top:368px;width:85px;"><span>Pending</span></div>
<div class="cell" style="left:1055px;top:368px;width:84px;"><span>Online Payment</span></div>
<div class="cell" style="left:1139px;top:368px;width:85px;"><span>Apr 23, 2024</span></div>
<div class="cell" style="left:1224px;top:368px;width:85px;"><span>High</span></div>
<div class="rh" style="top:384px"><span>19</span></div>
<div class="a" style="left:35px;top:384px;width:1245px;height:16px;background:#ffffff"></div>
<div class="cell" style="left:35px;top:384px;width:84px;"><span>WED-0018</span></div>
<div class="cell" style="left:119px;top:384px;width:85px;"><span>Jul 05, 2024</span></div>
<div class="cell" style="left:204px;top:384px;width:85px;"><span>Attire</span></div>
<div class="cell" style="left:289px;top:384px;width:149px;"><span>Groomsmen Suits</span></div>
<div class="cell" style="left:438px;top:384px;width:119px;"><span>Harmony Music Group</span></div>
<div class="cell" style="left:557px;top:384px;width:244px;"><span>Groomsmen Suits — Harmony Music Group</span></div>
<div class="cell" style="left:801px;top:384px;width:84px;"><span>$930</span></div>
<div class="cell" style="left:885px;top:384px;width:85px;"><span>$847</span></div>
<div class="cell" style="left:970px;top:384px;width:85px;background:#bcdaf6;color:#2f5f96;"><span>Partially Paid</span></div>
<div class="cell" style="left:1055px;top:384px;width:84px;"><span>Bank Transfer</span></div>
<div class="cell" style="left:1139px;top:384px;width:85px;"><span>Jul 19, 2024</span></div>
<div class="cell" style="left:1224px;top:384px;width:85px;background:#c6e3c8;color:#3b7a45;"><span>Low</span></div>
<div class="rh" style="top:400px"><span>20</span></div>
<div class="a" style="left:35px;top:400px;width:1245px;height:16px;background:#e8efe4"></div>
<div class="cell" style="left:35px;top:400px;width:84px;"><span>WED-0019</span></div>
<div class="cell" style="left:119px;top:400px;width:85px;"><span>May 14, 2024</span></div>
<div class="cell" style="left:204px;top:400px;width:85px;"><span>Rentals</span></div>
<div class="cell" style="left:289px;top:400px;width:149px;"><span>Tables &amp; Chairs</span></div>
<div class="cell" style="left:438px;top:400px;width:119px;"><span>GreenLeaf Decor</span></div>
<div class="cell" style="left:557px;top:400px;width:244px;"><span>Tables &amp; Chairs — GreenLeaf Decor</span></div>
<div class="cell" style="left:801px;top:400px;width:84px;"><span>$1,160</span></div>
<div class="cell" style="left:885px;top:400px;width:85px;"><span>$1,115</span></div>
<div class="cell" style="left:970px;top:400px;width:85px;"><span>Pending</span></div>
<div class="cell" style="left:1055px;top:400px;width:84px;"><span>Bank Transfer</span></div>
<div class="cell" style="left:1139px;top:400px;width:85px;"><span>May 22, 2024</span></div>
<div class="cell" style="left:1224px;top:400px;width:85px;"><span>Medium</span></div>
<div class="rh" style="top:416px"><span>21</span></div>
<div class="a" style="left:35px;top:416px;width:1245px;height:16px;background:#ffffff"></div>
<div class="cell" style="left:35px;top:416px;width:84px;"><span>WED-0020</span></div>
<div class="cell" style="left:119px;top:416px;width:85px;"><span>Apr 22, 2024</span></div>
<div class="cell" style="left:204px;top:416px;width:85px;"><span>Miscellaneous</span></div>
<div class="cell" style="left:289px;top:416px;width:149px;"><span>Wedding Planner</span></div>
<div class="cell" style="left:438px;top:416px;width:119px;"><span>Starlight DJ Services</span></div>
<div class="cell" style="left:557px;top:416px;width:244px;"><span>Wedding Planner — Starlight DJ Services</span></div>
<div class="cell" style="left:801px;top:416px;width:84px;"><span>$1,030</span></div>
<div class="cell" style="left:885px;top:416px;width:85px;"><span>$1,075</span></div>
<div class="cell" style="left:970px;top:416px;width:85px;background:#fff6c2;color:#d0973a;"><span>Pending</span></div>
<div class="cell" style="left:1055px;top:416px;width:84px;"><span>Cash</span></div>
<div class="cell" style="left:1139px;top:416px;width:85px;"><span>Apr 28, 2024</span></div>
<div class="cell" style="left:1224px;top:416px;width:85px;background:#fff6c2;color:#d0973a;"><span>Medium</span></div>
<div class="rh" style="top:432px"><span>22</span></div>
<div class="a" style="left:35px;top:432px;width:1245px;height:16px;background:#e8efe4"></div>
<div class="cell" style="left:35px;top:432px;width:84px;"><span>WED-0021</span></div>
<div class="cell" style="left:119px;top:432px;width:85px;"><span>Jan 09, 2024</span></div>
<div class="cell" style="left:204px;top:432px;width:85px;"><span>Cake &amp; Desserts</span></div>
<div class="cell" style="left:289px;top:432px;width:149px;"><span>Dessert Table</span></div>
<div class="cell" style="left:438px;top:432px;width:119px;"><span>Artful Arrangements</span></div>
<div class="cell" style="left:557px;top:432px;width:244px;"><span>Dessert Table — Artful Arrangements</span></div>
<div class="cell" style="left:801px;top:432px;width:84px;"><span>$830</span></div>
<div class="cell" style="left:885px;top:432px;width:85px;"><span>$671</span></div>
<div class="cell" style="left:970px;top:432px;width:85px;"><span>Paid</span></div>
<div class="cell" style="left:1055px;top:432px;width:84px;"><span>Cash</span></div>
<div class="cell" style="left:1139px;top:432px;width:85px;"><span>Jan 15, 2024</span></div>
<div class="cell" style="left:1224px;top:432px;width:85px;"><span>Medium</span></div>
<div class="rh" style="top:448px"><span>23</span></div>
<div class="a" style="left:35px;top:448px;width:1245px;height:16px;background:#ffffff"></div>
<div class="cell" style="left:35px;top:448px;width:84px;"><span>WED-0022</span></div>
<div class="cell" style="left:119px;top:448px;width:85px;"><span>Apr 11, 2024</span></div>
<div class="cell" style="left:204px;top:448px;width:85px;"><span>Catering</span></div>
<div class="cell" style="left:289px;top:448px;width:149px;"><span>Dinner Service</span></div>
<div class="cell" style="left:438px;top:448px;width:119px;"><span>Bella Bridal Boutique</span></div>
<div class="cell" style="left:557px;top:448px;width:244px;"><span>Dinner Service — Bella Bridal Boutique</span></div>
<div class="cell" style="left:801px;top:448px;width:84px;"><span>$3,930</span></div>
<div class="cell" style="left:885px;top:448px;width:85px;"><span>$4,118</span></div>
<div class="cell" style="left:970px;top:448px;width:85px;background:#fff6c2;color:#d0973a;"><span>Pending</span></div>
<div class="cell" style="left:1055px;top:448px;width:84px;"><span>Bank Transfer</span></div>
<div class="cell" style="left:1139px;top:448px;width:85px;"><span>Apr 28, 2024</span></div>
<div class="cell" style="left:1224px;top:448px;width:85px;background:#fbcbd0;color:#a9404c;"><span>High</span></div>
<div class="rh" style="top:464px"><span>24</span></div>
<div class="a" style="left:35px;top:464px;width:1245px;height:16px;background:#e8efe4"></div>
<div class="cell" style="left:35px;top:464px;width:84px;"><span>WED-0023</span></div>
<div class="cell" style="left:119px;top:464px;width:85px;"><span>Jan 17, 2024</span></div>
<div class="cell" style="left:204px;top:464px;width:85px;"><span>Transportation</span></div>
<div class="cell" style="left:289px;top:464px;width:149px;"><span>Bridal Car</span></div>
<div class="cell" style="left:438px;top:464px;width:119px;"><span>Glamour Hair Studio</span></div>
<div class="cell" style="left:557px;top:464px;width:244px;"><span>Bridal Car — Glamour Hair Studio</span></div>
<div class="cell" style="left:801px;top:464px;width:84px;"><span>$310</span></div>
<div class="cell" style="left:885px;top:464px;width:85px;"><span>$220</span></div>
<div class="cell" style="left:970px;top:464px;width:85px;"><span>Partially Paid</span></div>
<div class="cell" style="left:1055px;top:464px;width:84px;"><span>Cash</span></div>
<div class="cell" style="left:1139px;top:464px;width:85px;"><span>Jan 28, 2024</span></div>
<div class="cell" style="left:1224px;top:464px;width:85px;"><span>Low</span></div>
<div class="rh" style="top:480px"><span>25</span></div>
<div class="a" style="left:35px;top:480px;width:1245px;height:16px;background:#ffffff"></div>
<div class="cell" style="left:35px;top:480px;width:84px;"><span>WED-0024</span></div>
<div class="cell" style="left:119px;top:480px;width:85px;"><span>May 17, 2024</span></div>
<div class="cell" style="left:204px;top:480px;width:85px;"><span>Stationery</span></div>
<div class="cell" style="left:289px;top:480px;width:149px;"><span>Place Cards</span></div>
<div class="cell" style="left:438px;top:480px;width:119px;"><span>Dream Day Planners</span></div>
<div class="cell" style="left:557px;top:480px;width:244px;"><span>Place Cards — Dream Day Planners</span></div>
<div class="cell" style="left:801px;top:480px;width:84px;"><span>$900</span></div>
<div class="cell" style="left:885px;top:480px;width:85px;"><span>$844</span></div>
<div class="cell" style="left:970px;top:480px;width:85px;background:#bcdaf6;color:#2f5f96;"><span>Partially Paid</span></div>
<div class="cell" style="left:1055px;top:480px;width:84px;"><span>Cash</span></div>
<div class="cell" style="left:1139px;top:480px;width:85px;"><span>May 26, 2024</span></div>
<div class="cell" style="left:1224px;top:480px;width:85px;background:#fbcbd0;color:#a9404c;"><span>High</span></div>
<div class="rh" style="top:496px"><span>26</span></div>
<div class="a" style="left:35px;top:496px;width:1245px;height:16px;background:#e8efe4"></div>
<div class="cell" style="left:35px;top:496px;width:84px;"><span>WED-0025</span></div>
<div class="cell" style="left:119px;top:496px;width:85px;"><span>Aug 25, 2024</span></div>
<div class="cell" style="left:204px;top:496px;width:85px;"><span>Catering</span></div>
<div class="cell" style="left:289px;top:496px;width:149px;"><span>Brunch</span></div>
<div class="cell" style="left:438px;top:496px;width:119px;"><span>Starlight DJ Services</span></div>
<div class="cell" style="left:557px;top:496px;width:244px;"><span>Brunch — Starlight DJ Services</span></div>
<div class="cell" style="left:801px;top:496px;width:84px;"><span>$3,500</span></div>
<div class="cell" style="left:885px;top:496px;width:85px;"><span>$3,353</span></div>
<div class="cell" style="left:970px;top:496px;width:85px;"><span>Deposit Paid</span></div>
<div class="cell" style="left:1055px;top:496px;width:84px;"><span>Credit Card</span></div>
<div class="cell" style="left:1139px;top:496px;width:85px;"><span>Aug 26, 2024</span></div>
<div class="cell" style="left:1224px;top:496px;width:85px;"><span>Medium</span></div>
<div class="rh" style="top:512px"><span>27</span></div>
<div class="a" style="left:35px;top:512px;width:1245px;height:16px;background:#ffffff"></div>
<div class="cell" style="left:35px;top:512px;width:84px;"><span>WED-0026</span></div>
<div class="cell" style="left:119px;top:512px;width:85px;"><span>Mar 15, 2024</span></div>
<div class="cell" style="left:204px;top:512px;width:85px;"><span>Stationery</span></div>
<div class="cell" style="left:289px;top:512px;width:149px;"><span>Menu Cards</span></div>
<div class="cell" style="left:438px;top:512px;width:119px;"><span>Classic Car Co.</span></div>
<div class="cell" style="left:557px;top:512px;width:244px;"><span>Menu Cards — Classic Car Co.</span></div>
<div class="cell" style="left:801px;top:512px;width:84px;"><span>$1,000</span></div>
<div class="cell" style="left:885px;top:512px;width:85px;"><span>$1,235</span></div>
<div class="cell" style="left:970px;top:512px;width:85px;background:#fff6c2;color:#d0973a;"><span>Pending</span></div>
<div class="cell" style="left:1055px;top:512px;width:84px;"><span>Credit Card</span></div>
<div class="cell" style="left:1139px;top:512px;width:85px;"><span>Mar 28, 2024</span></div>
<div class="cell" style="left:1224px;top:512px;width:85px;background:#c6e3c8;color:#3b7a45;"><span>Low</span></div>
<div class="a" style="left:1223px;top:239px;width:60px;height:17px;border:2px solid #4a6cb0;box-shadow:inset 0 0 0 1px rgba(255,255,255,0.6)"></div>
<div class="a" style="left:1272px;top:66px;width:8px;height:42px;background:#fcfcfc;border-left:1px solid #e1e3e1;border-top:1px solid #e1e3e1"></div>
<div class="a" style="left:1272px;top:108px;width:8px;height:4px;background:#d4d6d6"></div>
<div class="a" style="left:1272px;top:112px;width:8px;height:410px;background:#fff;border-left:1px solid #e1e3e1"></div>
<div class="a" style="left:1274px;top:113px;width:6px;height:19px;border-radius:3px;background:#dadce0"></div>
</body></html>
